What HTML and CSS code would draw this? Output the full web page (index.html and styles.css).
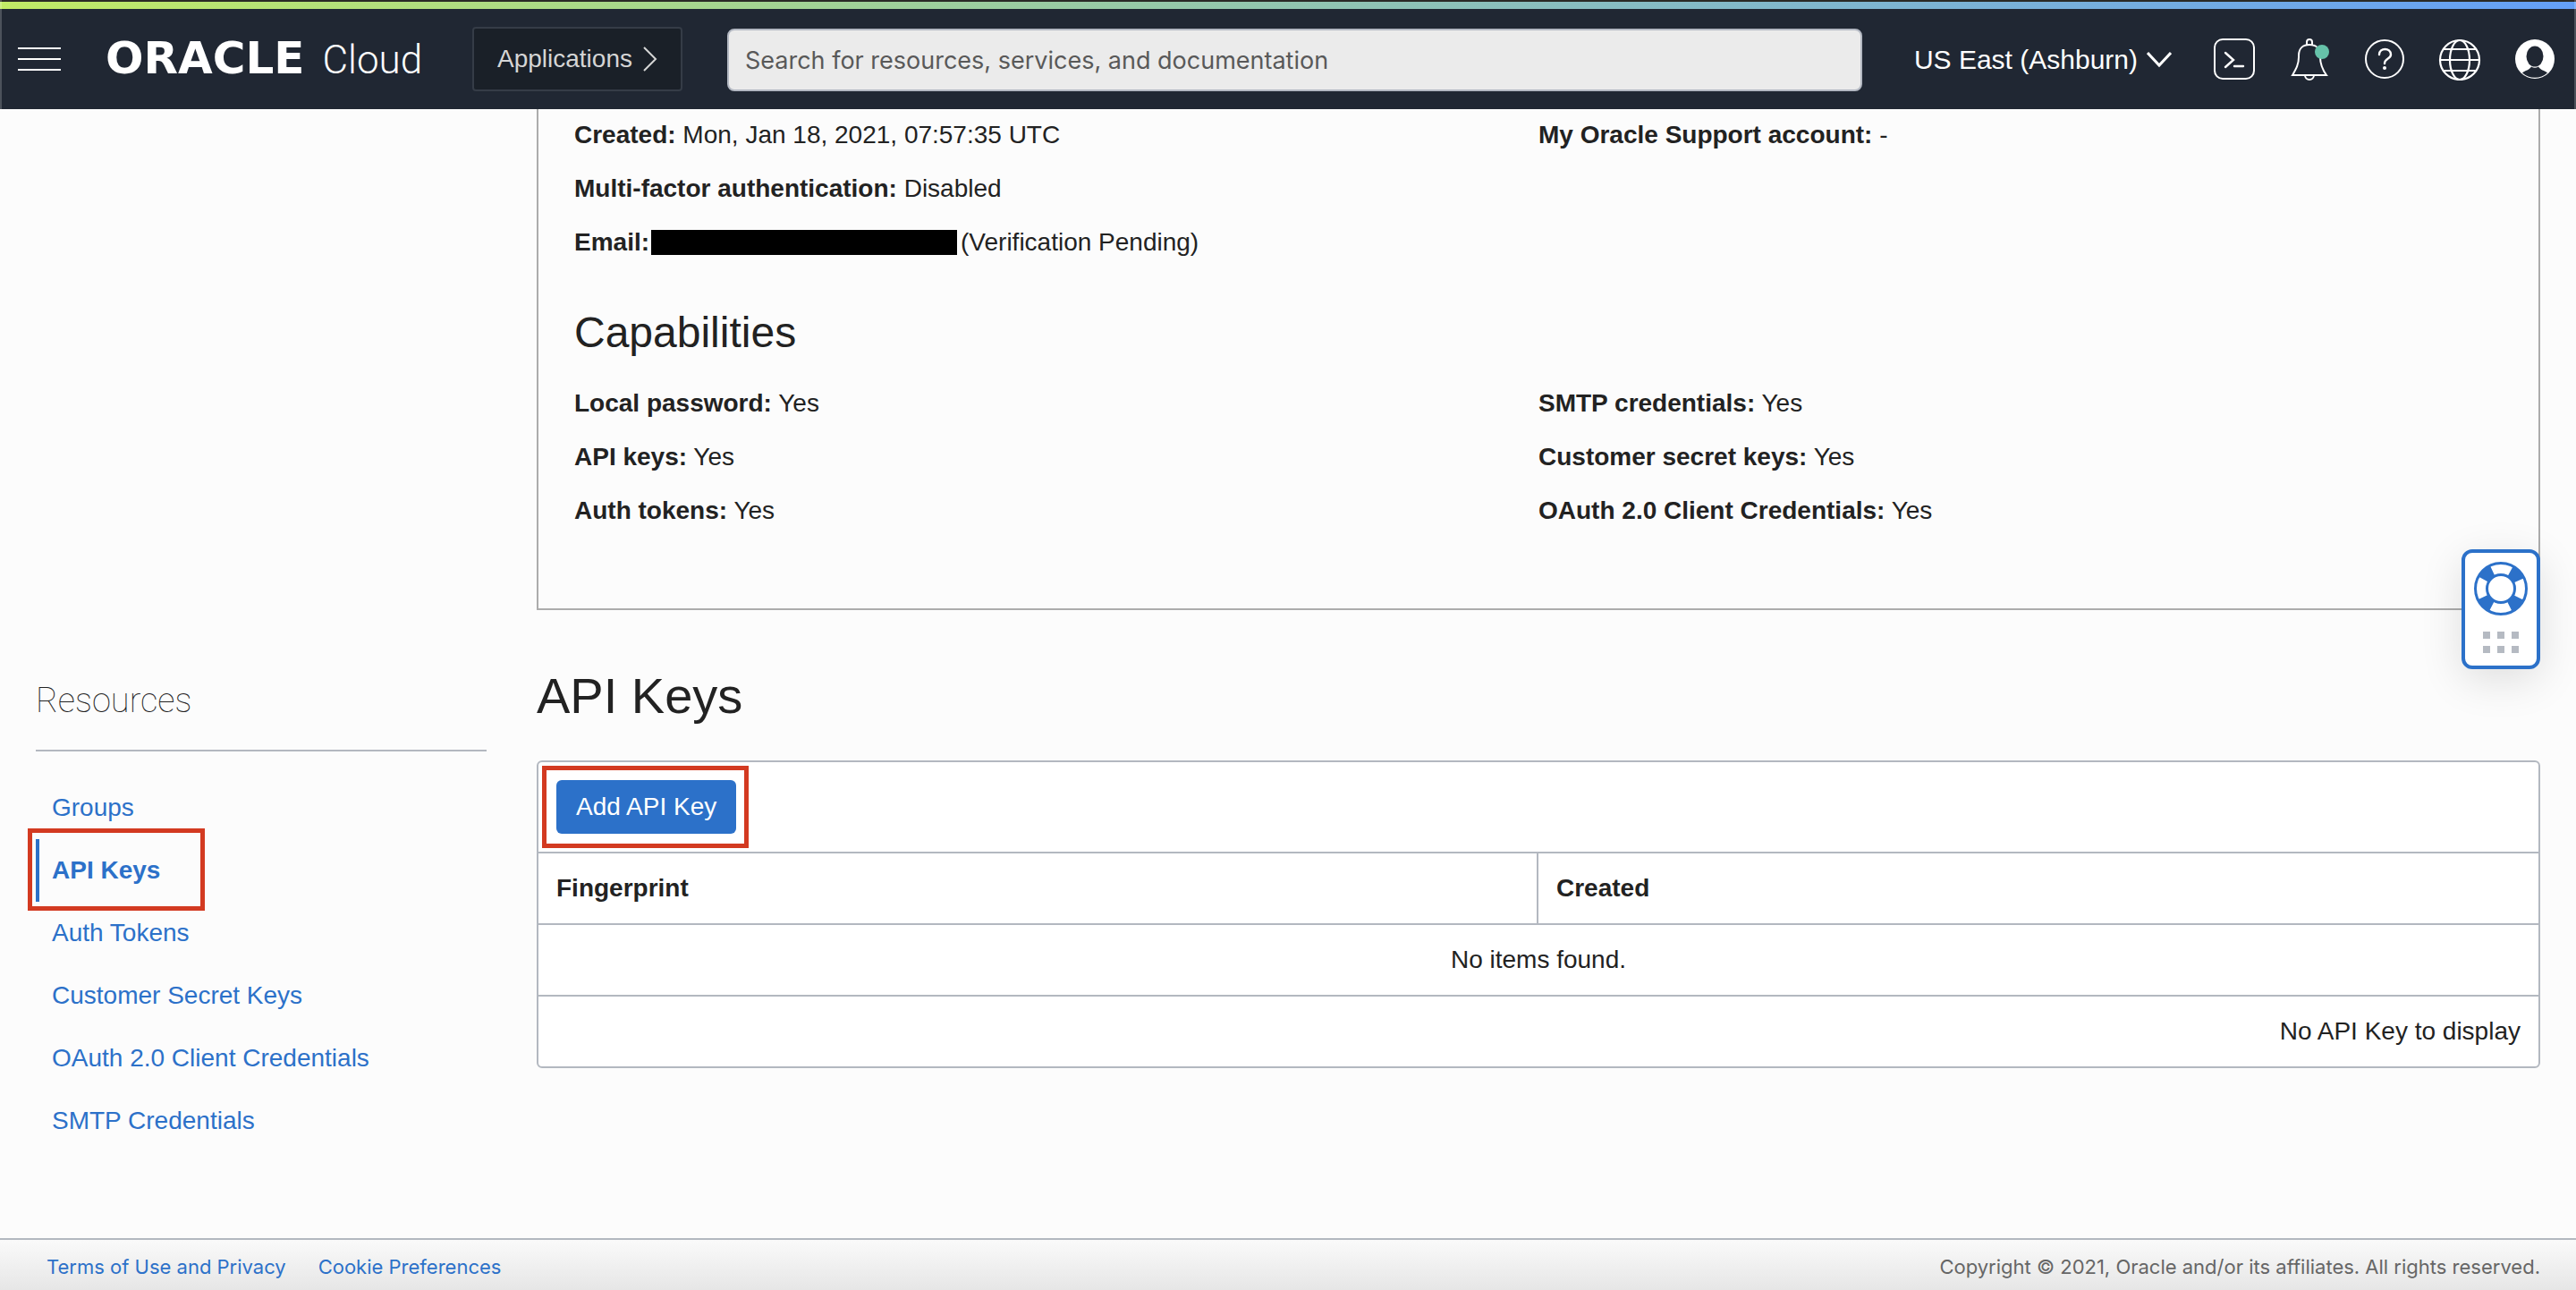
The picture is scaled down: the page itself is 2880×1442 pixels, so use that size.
FILE: index.html
```html
<!DOCTYPE html>
<html lang="en">
<head>
<meta charset="utf-8">
<title>API Keys - Oracle Cloud</title>
<link rel="stylesheet" href="styles.css">
</head>
<body>
<header class="topbar">
  <button class="icon-btn" aria-label="Open navigation menu">
    <svg width="48" height="26" viewBox="0 0 48 26"><path d="M0 1h48M0 13h48M0 25h48" stroke="#fff" stroke-width="2"/></svg>
  </button>
  <a class="brand" href="#"><span class="brand-name">ORACLE</span><span class="brand-product">Cloud</span></a>
  <button class="apps-btn">Applications
    <svg width="16" height="28" viewBox="0 0 16 28" fill="none" stroke="currentColor" stroke-width="2"><path d="M1 1l13 13L1 27"/></svg>
  </button>
  <input class="search" type="search" aria-label="Search" placeholder="Search for resources, services, and documentation">
  <button class="region-btn">US East (Ashburn)
    <svg width="28" height="18" viewBox="0 0 28 18" fill="none" stroke="#fff" stroke-width="3"><path d="M1 1l13 14L27 1"/></svg>
  </button>
  <nav class="tools" aria-label="Tools">
    <button class="icon-btn" aria-label="Cloud Shell">
      <svg width="48" height="48" viewBox="0 0 48 48" fill="none" stroke="#fff" stroke-width="2"><rect x="2" y="2" width="44" height="44" rx="9"/><path d="M14 17l9 8-9 8M24 32h10" stroke-width="2.4" stroke-linecap="round"/></svg>
    </button>
    <button class="icon-btn" aria-label="Announcements">
      <svg width="48" height="48" viewBox="0 0 48 48" fill="none" stroke="#fff" stroke-width="2"><path d="M21 8V5a3 3 0 0 1 6 0v3M5 42h38c-5-7-7-12-7-20v-2c0-8-5-12-12-12S12 12 12 20v2c0 8-3 13-7 20zM19 42a5 5 0 0 0 10 0"/><circle cx="38" cy="16" r="8" fill="#66c2a9" stroke="none"/></svg>
    </button>
    <button class="icon-btn" aria-label="Help">
      <svg width="48" height="48" viewBox="0 0 48 48" fill="none" stroke="#fff" stroke-width="2"><circle cx="24" cy="24" r="21"/><path d="M18 19c0-8 13-8 13 0 0 5-7 4-7 10" stroke-width="2.4" stroke-linecap="round"/><circle cx="24" cy="34" r="2" fill="#fff" stroke="none"/></svg>
    </button>
    <button class="icon-btn" aria-label="Language">
      <svg width="48" height="48" viewBox="0 0 48 48" fill="none" stroke="#fff" stroke-width="2.2"><circle cx="24" cy="25" r="22"/><ellipse cx="24" cy="25" rx="11" ry="22"/><path d="M2 25h44M6 13h36M6 37h36"/></svg>
    </button>
    <button class="icon-btn" aria-label="Profile">
      <svg width="48" height="48" viewBox="0 0 48 48"><circle cx="24" cy="24" r="22" fill="#fff"/><ellipse cx="24" cy="21" rx="9.5" ry="11.500" fill="#202733"/><path d="M10 39.500c3-3 8-3 10-7q4 2.500 8 0c2 4 7 4 10 7a21 21 0 0 1-28 0z" fill="#202733"/></svg>
    </button>
  </nav>
</header>

<main class="page">
  <section class="card">
    <div class="columns">
      <div>
        <p class="field"><b>Created:</b> Mon, Jan 18, 2021, 07:57:35 UTC</p>
        <p class="field"><b>Multi-factor authentication:</b> Disabled</p>
        <p class="field"><b>Email:</b><span class="redacted"></span>(Verification Pending)</p>
      </div>
      <div>
        <p class="field"><b>My Oracle Support account:</b> -</p>
      </div>
    </div>
    <h2 class="card-title">Capabilities</h2>
    <div class="columns">
      <div>
        <p class="field"><b>Local password:</b> Yes</p>
        <p class="field"><b>API keys:</b> Yes</p>
        <p class="field"><b>Auth tokens:</b> Yes</p>
      </div>
      <div>
        <p class="field"><b>SMTP credentials:</b> Yes</p>
        <p class="field"><b>Customer secret keys:</b> Yes</p>
        <p class="field"><b>OAuth 2.0 Client Credentials:</b> Yes</p>
      </div>
    </div>
  </section>

  <nav class="resources" aria-labelledby="resources-title">
    <h2 class="resources-title" id="resources-title">Resources</h2>
    <ul class="resource-list">
      <li><a class="resource" href="#">Groups</a></li>
      <li class="marked"><a class="resource current" href="#" aria-current="page">API Keys</a></li>
      <li><a class="resource" href="#">Auth Tokens</a></li>
      <li><a class="resource" href="#">Customer Secret Keys</a></li>
      <li><a class="resource" href="#">OAuth 2.0 Client Credentials</a></li>
      <li><a class="resource" href="#">SMTP Credentials</a></li>
    </ul>
  </nav>

  <section class="keys">
    <h1 class="keys-title">API Keys</h1>
    <div class="panel">
      <div class="toolbar"><span class="marked-button"><button class="primary">Add API Key</button></span></div>
      <table class="grid">
        <thead><tr><th class="fingerprint">Fingerprint</th><th>Created</th></tr></thead>
        <tbody><tr><td class="empty" colspan="2">No items found.</td></tr></tbody>
        <tfoot><tr><td class="summary" colspan="2">No API Key to display</td></tr></tfoot>
      </table>
    </div>
  </section>
</main>

<footer class="footer">
  <a href="#">Terms of Use and Privacy</a>
  <a href="#">Cookie Preferences</a>
  <span class="copyright">Copyright © 2021, Oracle and/or its affiliates. All rights reserved.</span>
</footer>

<button class="support" aria-label="Support">
  <svg width="80" height="126" viewBox="0 0 80 126">
    <g transform="translate(40 40)" fill="none" stroke="#2c71c9">
      <circle r="22" stroke-width="13" stroke-dasharray="14 20.560" stroke-dashoffset="-10.280"/>
      <circle r="28.500" stroke-width="3"/>
      <circle r="15.500" stroke-width="3"/>
    </g>
    <path fill="#b5bac2" d="M20 88h8v8h-8zM36 88h8v8h-8zM52 88h8v8h-8zM20 104h8v8h-8zM36 104h8v8h-8zM52 104h8v8h-8z"/>
  </svg>
</button>
</body>
</html>
```
FILE: styles.css
```css
*, *::after { box-sizing: border-box; }

body {
  margin: 0;
  min-height: 100vh;
  display: flex;
  flex-direction: column;
  position: relative;
  background: #fcfcfc;
  color: #222;
  font: 28px/60px "Liberation Sans", Arial, sans-serif;
}

button { font: inherit; line-height: 32px; cursor: pointer; }
a { color: #2c71c9; text-decoration: none; }
h1, h2, p, ul { margin: 0; padding: 0; font-weight: 400; }
svg { display: block; flex: none; }

/* Top bar */
.topbar {
  display: flex;
  align-items: center;
  height: 122px;
  padding: 10px 20px 0 18px;
  border: solid rgba(255, 255, 255, 0.2);
  border-width: 0 2px;
  background:
    linear-gradient(#2a2a26, #2a2a26) border-box 0 0 / 100% 2px no-repeat,
    linear-gradient(90deg, #c1ea66, #9dcf9c 36%, #7fb6cf 72%, #649ff7) border-box 0 2px / 100% 8px no-repeat,
    #202733 border-box;
  position: relative;
  z-index: 1;
}
.icon-btn { display: block; padding: 0; border: 0; background: none; }
.brand {
  display: flex;
  align-items: baseline;
  gap: 20px;
  width: 356px;
  margin-left: 50px;
  line-height: 48px;
  color: #fff;
}
.brand-name { font: bold 50px/48px "DejaVu Sans", Verdana, sans-serif; }
.brand-product { font: 300 44px/48px Roboto, "Liberation Sans", sans-serif; }
.apps-btn {
  display: flex;
  align-items: center;
  gap: 12px;
  height: 72px;
  margin-left: 54px;
  padding: 0 26px;
  border: 2px solid #353c47;
  border-radius: 4px;
  background: #1a2028;
  color: #d5d5d5;
  white-space: nowrap;
}
.search {
  flex: 1;
  min-width: 0;
  height: 70px;
  margin: 2px 58px 0 50px;
  padding: 0 18px;
  border: 2px solid #b3b8c2;
  border-radius: 8px;
  background: #ebebeb;
  color: #222;
  font: 27px/32px Inter, sans-serif;
}
.search::placeholder { color: #595959; opacity: 1; }
.region-btn {
  display: flex;
  align-items: center;
  gap: 10px;
  margin-right: 46px;
  padding: 2px 0 0;
  border: 0;
  background: none;
  color: #fff;
  font-size: 30px;
  white-space: nowrap;
}
.tools { display: flex; gap: 36px; }

/* Page body */
.page {
  flex: 1;
  display: grid;
  grid-template-columns: 504px 1fr;
  grid-template-rows: auto 1fr;
  column-gap: 56px;
  margin-top: -2px;
  padding: 0 40px;
}
.card {
  grid-column: 2;
  padding: 1px 40px 79px;
  border: 2px solid #acacac;
  border-top: 0;
}
.columns { display: grid; grid-template-columns: 1fr 1fr; }
.card-title { margin: 41px 0 19px; font-size: 48px; }
.redacted {
  display: inline-block;
  width: 342px;
  height: 28px;
  margin: 0 4px 3px 2px;
  background: #000;
  vertical-align: middle;
}

/* Resource navigation */
.resources { padding-top: 77px; }
.resources-title {
  padding-bottom: 31px;
  border-bottom: 2px solid #b3b8c0;
  font: 100 38px/48px Roboto, "Liberation Sans", sans-serif;
}
.resource-list { margin-top: 28px; list-style: none; }
.resource { display: block; padding-left: 18px; line-height: 70px; }
.current {
  padding-left: 14px;
  border-left: 4px solid #2c71c9;
  font-weight: 700;
}
.marked { position: relative; }
.marked::after {
  content: "";
  position: absolute;
  inset: -12px auto -10px -9px;
  width: 198px;
  border: 5px solid #d33a21;
  pointer-events: none;
}

/* API key list */
.keys { padding-top: 64px; }
.keys-title { margin-bottom: 40px; font-size: 56px; line-height: 64px; }
.panel { border: 2px solid #b3b8c0; border-radius: 6px; background: #fff; }
.toolbar { display: flex; align-items: center; height: 100px; padding: 0 20px; }
.marked-button { position: relative; display: flex; }
.marked-button::after {
  content: "";
  position: absolute;
  inset: -16px -14px -16px -16px;
  border: 5px solid #d33a21;
  pointer-events: none;
}
.primary {
  height: 60px;
  padding: 0 22px;
  border: 0;
  border-radius: 6px;
  background: #2c71c9;
  color: #fff;
}
.grid { width: 100%; border-collapse: separate; border-spacing: 0; table-layout: fixed; }
.grid th, .grid td {
  height: 80px;
  padding: 0 20px;
  border-top: 2px solid #b3b8c0;
  line-height: 32px;
  text-align: left;
}
.grid .fingerprint { width: calc(50% - 2px); border-right: 2px solid #b3b8c0; }
.grid .empty { text-align: center; }
.grid .summary { text-align: right; }

/* Footer */
.footer {
  display: flex;
  align-items: center;
  gap: 36px;
  height: 58px;
  padding: 4px 40px 0 52px;
  border-top: 2px solid #b3b8c0;
  background: linear-gradient(#fafafa, #e6e6e6);
  font: 22px/32px Inter, sans-serif;
}
.copyright { margin-left: auto; color: #666; }

/* Floating support launcher */
.support {
  position: absolute;
  top: 614px;
  right: 40px;
  z-index: 2;
  padding: 0;
  border: 4px solid #2c71c9;
  border-radius: 12px;
  background: #fff;
  box-shadow: 0 12px 48px rgba(0, 0, 0, 0.12);
}
```
